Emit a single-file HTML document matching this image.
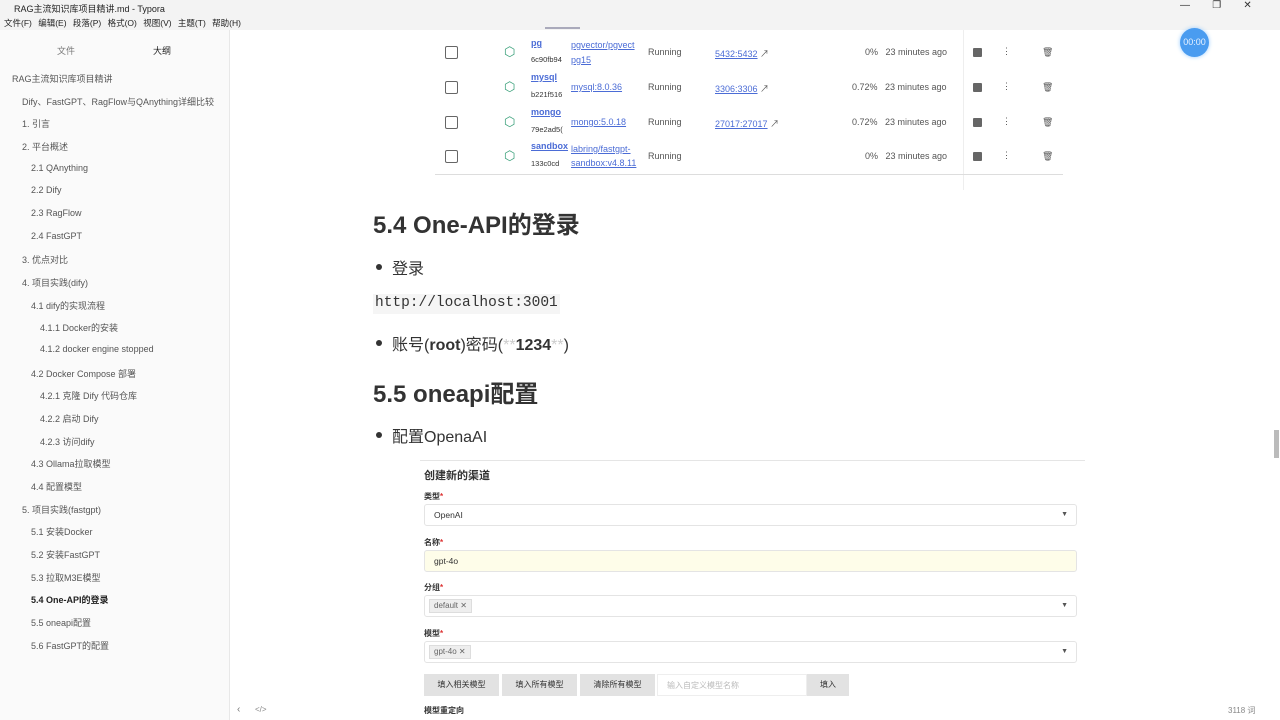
<!DOCTYPE html>
<html><head><meta charset="utf-8"><style>
*{margin:0;padding:0;box-sizing:border-box}
body{width:1280px;height:720px;overflow:hidden;background:#fff;font-family:"Liberation Sans","Noto Sans CJK SC",sans-serif;color:#333;position:relative}
.a{position:absolute;white-space:nowrap}
.side{position:absolute;left:0;top:30px;width:230px;height:690px;background:#fafafa;border-right:1px solid #e8e8e8}
.si{position:absolute;font-size:9px;color:#555}
.t{font-size:9px;color:#555}
.lk{color:#4b6cd6;text-decoration:underline}
.cb{position:absolute;width:13px;height:13px;border:1.5px solid #666;border-radius:2px}
.sq{position:absolute;width:9px;height:9px;background:#666;border-radius:1px}
.inp{position:absolute;left:424px;width:653px;height:22px;border:1px solid #e4e4e4;border-radius:3px;background:#fff}
.lbl{position:absolute;left:424px;font-size:8px;color:#333;font-weight:bold}
.lbl i{color:#d33;font-style:normal}
.tag{position:absolute;left:4px;top:3px;height:14px;background:#eee;border:1px solid #ddd;font-size:8px;color:#666;padding:1px 4px}
.car{position:absolute;right:8px;top:6px;font-size:7px;color:#555}
.btn{position:absolute;top:674px;height:22px;background:#e2e2e2;font-size:8px;color:#333;text-align:center;line-height:22px}
.dot{position:absolute;width:6px;height:6px;border-radius:50%;background:#333}
</style></head><body>
<div class="a" style="left:0;top:0;width:1280px;height:14px;background:#f3f3f3"></div>
<div class="a" style="left:14px;top:2px;font-size:9px;color:#222">RAG主流知识库项目精讲.md - Typora</div>
<div class="a" style="left:1180px;top:0;font-size:10px;color:#333">—&nbsp;&nbsp;&nbsp;&nbsp;&nbsp;&nbsp;&nbsp;&nbsp;❐&nbsp;&nbsp;&nbsp;&nbsp;&nbsp;&nbsp;&nbsp;&nbsp;✕</div>
<div class="a" style="left:0;top:14px;width:1280px;height:16px;background:#f3f3f3"></div>
<div class="a" style="left:4px;top:17px;font-size:8.5px;color:#222;word-spacing:4px">文件(F) 编辑(E) 段落(P) 格式(O) 视图(V) 主题(T) 帮助(H)</div>
<div class="side">
<div class="si" style="left:57px;top:14px;color:#777">文件</div>
<div class="si" style="left:153px;top:14px;color:#222">大纲</div>
<div class="si" style="left:12px;top:42px">RAG主流知识库项目精讲</div>
<div class="si" style="left:22px;top:65px">Dify、FastGPT、RagFlow与QAnything详细比较</div>
<div class="si" style="left:22px;top:87px">1. 引言</div>
<div class="si" style="left:22px;top:110px">2. 平台概述</div>
<div class="si" style="left:31px;top:133px">2.1 QAnything</div>
<div class="si" style="left:31px;top:155px">2.2 Dify</div>
<div class="si" style="left:31px;top:178px">2.3 RagFlow</div>
<div class="si" style="left:31px;top:201px">2.4 FastGPT</div>
<div class="si" style="left:22px;top:223px">3. 优点对比</div>
<div class="si" style="left:22px;top:246px">4. 项目实践(dify)</div>
<div class="si" style="left:31px;top:269px">4.1 dify的实现流程</div>
<div class="si" style="left:40px;top:291px">4.1.1 Docker的安装</div>
<div class="si" style="left:40px;top:314px">4.1.2 docker engine stopped</div>
<div class="si" style="left:31px;top:337px">4.2 Docker Compose 部署</div>
<div class="si" style="left:40px;top:359px">4.2.1 克隆 Dify 代码仓库</div>
<div class="si" style="left:40px;top:382px">4.2.2 启动 Dify</div>
<div class="si" style="left:40px;top:405px">4.2.3 访问dify</div>
<div class="si" style="left:31px;top:427px">4.3 Ollama拉取模型</div>
<div class="si" style="left:31px;top:450px">4.4 配置模型</div>
<div class="si" style="left:22px;top:473px">5. 项目实践(fastgpt)</div>
<div class="si" style="left:31px;top:495px">5.1 安装Docker</div>
<div class="si" style="left:31px;top:518px">5.2 安装FastGPT</div>
<div class="si" style="left:31px;top:541px">5.3 拉取M3E模型</div>
<div class="si" style="left:31px;top:563px;font-weight:bold;color:#222">5.4 One-API的登录</div>
<div class="si" style="left:31px;top:586px">5.5 oneapi配置</div>
<div class="si" style="left:31px;top:609px">5.6 FastGPT的配置</div>
</div>
<div class="a" style="left:237px;top:704px;font-size:10px;color:#777">‹</div>
<div class="a" style="left:255px;top:705px;font-size:8px;color:#888">&lt;/&gt;</div>
<div class="a" style="left:1228px;top:705px;font-size:8px;color:#888">3118 词</div>
<div class="a" style="left:1274px;top:430px;width:5px;height:28px;background:#bbb"></div>
<div class="a" style="left:1180px;top:28px;width:29px;height:29px;border-radius:50%;background:#4a9cf0;box-shadow:0 0 4px #9cf;color:#e8f2ff;font-size:9px;text-align:center;line-height:29px">00:00</div>
<!-- docker table -->
<div class="a" style="left:545px;top:27px;width:35px;height:2px;background:#aab"></div>
<div class="a" style="left:963px;top:30px;width:1px;height:160px;background:#eee"></div>
<div class="a" style="left:435px;top:174px;width:628px;height:1px;background:#ddd"></div>
<div class="cb" style="left:445px;top:46px"></div>
<div class="cb" style="left:445px;top:81px"></div>
<div class="cb" style="left:445px;top:116px"></div>
<div class="cb" style="left:445px;top:150px"></div>
<div class="a" style="left:504px;top:44px;color:#3aa07a;font-size:13px">⬡</div>
<div class="a" style="left:504px;top:79px;color:#3aa07a;font-size:13px">⬡</div>
<div class="a" style="left:504px;top:114px;color:#3aa07a;font-size:13px">⬡</div>
<div class="a" style="left:504px;top:148px;color:#3aa07a;font-size:13px">⬡</div>
<div class="a t lk" style="left:531px;top:38px;font-weight:bold">pg</div><div class="a" style="left:531px;top:55px;font-size:7.5px">6c90fb94</div>
<div class="a t lk" style="left:531px;top:72px;font-weight:bold">mysql</div><div class="a" style="left:531px;top:90px;font-size:7.5px">b221f516</div>
<div class="a t lk" style="left:531px;top:107px;font-weight:bold">mongo</div><div class="a" style="left:531px;top:125px;font-size:7.5px">79e2ad5(</div>
<div class="a t lk" style="left:531px;top:141px;font-weight:bold">sandbox</div><div class="a" style="left:531px;top:159px;font-size:7.5px">133c0cd</div>
<div class="a t lk" style="left:571px;top:40px">pgvector/pgvect</div><div class="a t lk" style="left:571px;top:55px">pg15</div>
<div class="a t lk" style="left:571px;top:82px">mysql:8.0.36</div>
<div class="a t lk" style="left:571px;top:117px">mongo:5.0.18</div>
<div class="a t lk" style="left:571px;top:144px">labring/fastgpt-</div><div class="a t lk" style="left:571px;top:158px">sandbox:v4.8.11</div>
<div class="a t" style="left:648px;top:47px">Running</div>
<div class="a t" style="left:648px;top:82px">Running</div>
<div class="a t" style="left:648px;top:117px">Running</div>
<div class="a t" style="left:648px;top:151px">Running</div>
<div class="a t" style="left:715px;top:47px"><span class="lk">5432:5432</span> ↗</div>
<div class="a t" style="left:715px;top:82px"><span class="lk">3306:3306</span> ↗</div>
<div class="a t" style="left:715px;top:117px"><span class="lk">27017:27017</span> ↗</div>
<div class="a t" style="left:865px;top:47px">0%&nbsp;&nbsp; 23 minutes ago</div>
<div class="a t" style="left:852px;top:82px">0.72%&nbsp;&nbsp; 23 minutes ago</div>
<div class="a t" style="left:852px;top:117px">0.72%&nbsp;&nbsp; 23 minutes ago</div>
<div class="a t" style="left:865px;top:151px">0%&nbsp;&nbsp; 23 minutes ago</div>
<div class="sq" style="left:973px;top:48px"></div><div class="sq" style="left:973px;top:83px"></div><div class="sq" style="left:973px;top:118px"></div><div class="sq" style="left:973px;top:152px"></div>
<div class="a t" style="left:1002px;top:46px">⋮</div><div class="a t" style="left:1002px;top:81px">⋮</div><div class="a t" style="left:1002px;top:116px">⋮</div><div class="a t" style="left:1002px;top:150px">⋮</div>
<div class="a t" style="left:1042px;top:47px">🗑</div><div class="a t" style="left:1042px;top:82px">🗑</div><div class="a t" style="left:1042px;top:117px">🗑</div><div class="a t" style="left:1042px;top:151px">🗑</div>
<!-- content -->
<div class="a" style="left:373px;top:205px;font-size:24px;font-weight:bold;color:#333">5.4 One-API的登录</div>
<div class="dot" style="left:376px;top:264px"></div>
<div class="a" style="left:392px;top:255px;font-size:16px">登录</div>
<div class="a" style="left:373px;top:294px;height:20px;background:#f5f5f5;padding:1px 2px;font-family:'Liberation Mono',monospace;font-size:14.5px;color:#333">http://localhost:3001</div>
<div class="dot" style="left:376px;top:340px"></div>
<div class="a" style="left:392px;top:331px;font-size:16px">账号(<b>root</b>)密码(<span style="color:#ccc">**</span><b>1234</b><span style="color:#ccc">**</span>)</div>
<div class="a" style="left:373px;top:374px;font-size:24px;font-weight:bold;color:#333">5.5 oneapi配置</div>
<div class="dot" style="left:376px;top:432px"></div>
<div class="a" style="left:392px;top:423px;font-size:16px">配置OpenaAI</div>
<!-- form -->
<div class="a" style="left:420px;top:460px;width:665px;height:1px;background:#e5e5e5"></div>
<div class="a" style="left:424px;top:467px;font-size:11px;font-weight:bold;color:#333">创建新的渠道</div>
<div class="lbl" style="top:491px">类型<i>*</i></div>
<div class="inp" style="top:504px"><span class="a" style="left:9px;top:5px;font-size:8.5px">OpenAI</span><span class="car">▼</span></div>
<div class="lbl" style="top:537px">名称<i>*</i></div>
<div class="inp" style="top:550px;background:#fefde9"><span class="a" style="left:9px;top:5px;font-size:8.5px">gpt-4o</span></div>
<div class="lbl" style="top:582px">分组<i>*</i></div>
<div class="inp" style="top:595px"><span class="tag">default ✕</span><span class="car">▼</span></div>
<div class="lbl" style="top:628px">模型<i>*</i></div>
<div class="inp" style="top:641px"><span class="tag">gpt-4o ✕</span><span class="car">▼</span></div>
<div class="btn" style="left:424px;width:75px">填入相关模型</div>
<div class="btn" style="left:502px;width:75px">填入所有模型</div>
<div class="btn" style="left:580px;width:75px">清除所有模型</div>
<div class="btn" style="left:657px;width:150px;background:#fff;border:1px solid #eee;color:#bbb;text-align:left;padding-left:9px">输入自定义模型名称</div>
<div class="btn" style="left:807px;width:42px">填入</div>
<div class="lbl" style="top:705px">模型重定向</div>
</body></html>
